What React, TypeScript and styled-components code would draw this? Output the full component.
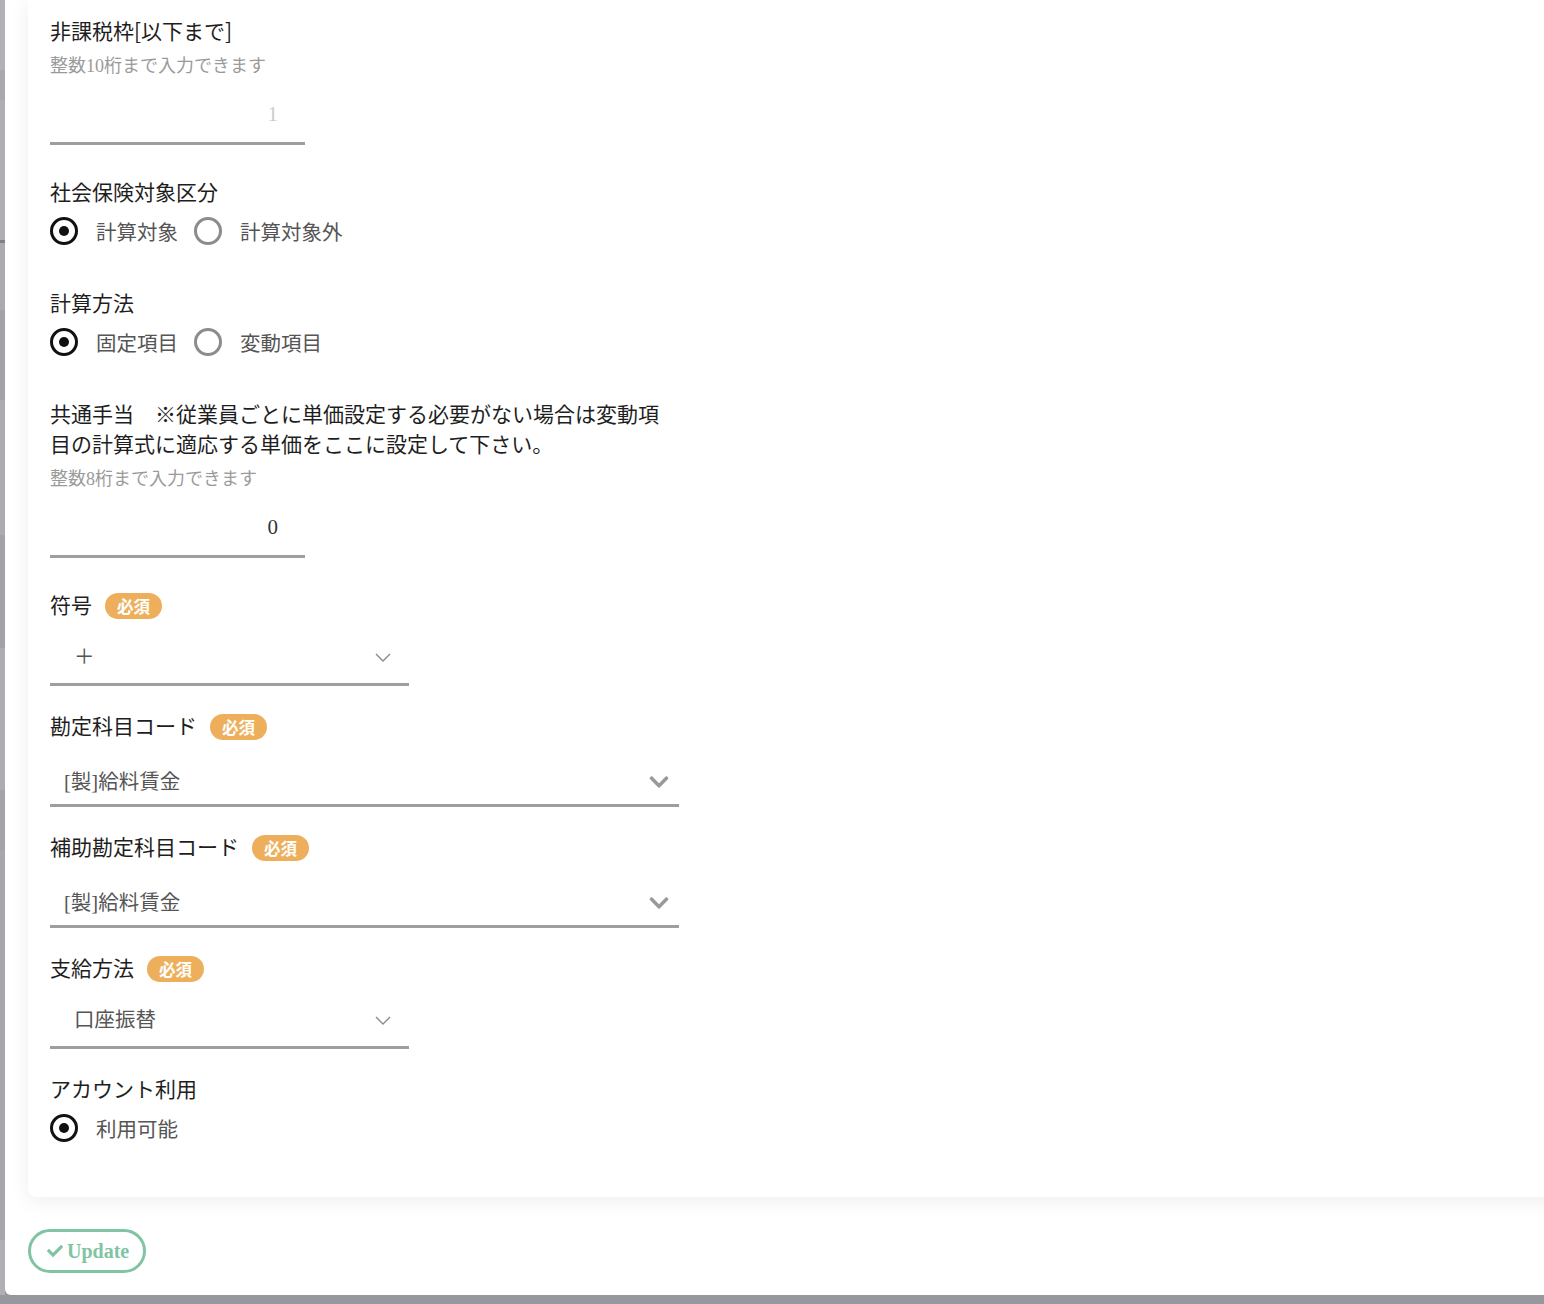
import React from 'react';
import styled, { createGlobalStyle } from 'styled-components';
import { FaCheck, FaChevronDown } from 'react-icons/fa';

const GlobalStyle = createGlobalStyle`
    html, body {
        margin: 0;
        padding: 0;
    }
    body {
        background: #97979f;
        font-family: "Noto Sans CJK JP", "Noto Sans", sans-serif;
        overflow: hidden;
    }
`;

const Page = styled.div`
    display: flex;
    width: 1544px;
    height: 1304px;
    overflow: hidden;
`;

const BehindStrip = styled.div`
    display: flex;
    flex-direction: column;
    width: 5px;
    height: 1295px;
    flex-shrink: 0;
`;

const Band = styled.div<{ h: number; shade: string }>`
    height: ${p => p.h}px;
    background: ${p => p.shade};
    flex-shrink: 0;
`;

const Modal = styled.div`
    width: 1600px;
    height: 1295px;
    flex-shrink: 0;
    background: #fff;
    border-bottom-left-radius: 6px;
    padding-left: 23px;
    box-sizing: border-box;
    display: flex;
    flex-direction: column;
`;

const Card = styled.div`
    background: #fff;
    border-radius: 0 0 8px 8px;
    box-shadow: 0 4px 20px rgba(0, 0, 0, 0.07);
    padding: 15px 22px 54px;
    display: flex;
    flex-direction: column;
`;

const Field = styled.div<{ after?: number }>`
    display: flex;
    flex-direction: column;
    margin-bottom: ${p => p.after ?? 0}px;
`;

const Label = styled.div<{ wrap?: number }>`
    display: flex;
    align-items: center;
    font-size: 21px;
    line-height: 30px;
    color: #1e1e1e;
    max-width: ${p => (p.wrap ? `${p.wrap}px` : 'none')};
`;

const Badge = styled.span`
    display: inline-flex;
    align-items: center;
    justify-content: center;
    width: 57px;
    height: 26px;
    margin: 4px 0 0 13px;
    border-radius: 13px;
    background: #edaf5b;
    color: #fff;
    font-size: 16.5px;
    font-weight: 700;
    line-height: 1;
`;

const Helper = styled.div`
    margin-top: 9px;
    font-family: "Liberation Serif", "Noto Sans CJK JP", serif;
    font-size: 18px;
    line-height: 24px;
    color: #9a9a9a;
`;

const TextInput = styled.div<{ placeholder?: boolean }>`
    margin-top: 7px;
    width: 255px;
    height: 60px;
    box-sizing: border-box;
    border-bottom: 3px solid #9e9e9e;
    padding: 2px 27px 0 0;
    display: flex;
    align-items: center;
    justify-content: flex-end;
    font-family: "Liberation Serif", serif;
    font-size: 21px;
    color: ${p => (p.placeholder ? '#cccccc' : '#333')};
`;

const RadioRow = styled.div`
    margin-top: 10px;
    height: 30px;
    display: flex;
    align-items: center;
`;

const RadioOption = styled.label`
    display: flex;
    align-items: center;
    margin-right: 16px;
    font-size: 20.5px;
    color: #555;
`;

const Circle = styled.span<{ checked?: boolean }>`
    width: 28px;
    height: 28px;
    box-sizing: border-box;
    border-radius: 50%;
    border: 3.5px solid ${p => (p.checked ? '#111' : '#8c8c8c')};
    display: flex;
    align-items: center;
    justify-content: center;
    margin-right: 18px;

    &::after {
        content: '';
        display: ${p => (p.checked ? 'block' : 'none')};
        width: 10px;
        height: 10px;
        border-radius: 50%;
        background: #111;
    }
`;

const Select = styled.div<{ wide?: boolean }>`
    width: ${p => (p.wide ? 629 : 359)}px;
    box-sizing: border-box;
    padding: ${p => (p.wide ? '20px 9px 0 14px' : '12px 18px 0 24px')};
    border-bottom: 3px solid #9e9e9e;
    display: flex;
    align-items: center;
    justify-content: space-between;
`;

const SelectValue = styled.span<{ wide?: boolean }>`
    font-family: "Liberation Serif", "Noto Sans CJK JP", serif;
    font-size: 20.5px;
    line-height: ${p => (p.wide ? 44 : 52)}px;
    color: #555;
`;

const ThinChevron = () => (
    <svg width="16" height="9" viewBox="0 0 16 9">
        <polyline points="1,1 8,8 15,1" fill="none" stroke="#8a8a8a" strokeWidth="1.4" />
    </svg>
);

const ButtonRow = styled.div`
    margin-top: 32px;
    display: flex;
`;

const UpdateButton = styled.button`
    display: flex;
    align-items: center;
    gap: 4px;
    height: 44px;
    width: 118px;
    box-sizing: border-box;
    padding: 0 0 0 16px;
    border: 3px solid #80c4a2;
    border-radius: 22px;
    background: #fff;
    color: #80c4a2;
    font-family: "Liberation Serif", serif;
    font-weight: 700;
    font-size: 20px;
    cursor: pointer;
`;

const bands: [number, string][] = [
    [70, '#b2b2b6'],
    [30, '#a9a9ad'],
    [140, '#afafb3'],
    [3, '#808086'],
    [67, '#ababaf'],
    [90, '#a3a3a7'],
    [135, '#acacb0'],
    [113, '#a2a2a6'],
    [142, '#adadb1'],
    [60, '#a4a4a8'],
    [390, '#a7a7ab'],
    [55, '#b0b0b4'],
];

export default function App() {
    return (
        <>
            <GlobalStyle />
            <Page>
                <BehindStrip>
                    {bands.map(([h, c], i) => (
                        <Band key={i} h={h} shade={c} />
                    ))}
                </BehindStrip>
                <Modal>
                    <Card>
                        <Field after={31}>
                            <Label>非課税枠[以下まで]</Label>
                            <Helper>整数10桁まで入力できます</Helper>
                            <TextInput placeholder>1</TextInput>
                        </Field>

                        <Field after={41}>
                            <Label>社会保険対象区分</Label>
                            <RadioRow>
                                <RadioOption><Circle checked />計算対象</RadioOption>
                                <RadioOption><Circle />計算対象外</RadioOption>
                            </RadioRow>
                        </Field>

                        <Field after={41}>
                            <Label>計算方法</Label>
                            <RadioRow>
                                <RadioOption><Circle checked />固定項目</RadioOption>
                                <RadioOption><Circle />変動項目</RadioOption>
                            </RadioRow>
                        </Field>

                        <Field after={31}>
                            <Label wrap={625}>
                                共通手当　※従業員ごとに単価設定する必要がない場合は変動項目の計算式に適応する単価をここに設定して下さい。
                            </Label>
                            <Helper>整数8桁まで入力できます</Helper>
                            <TextInput>0</TextInput>
                        </Field>

                        <Field after={24}>
                            <Label>符号<Badge>必須</Badge></Label>
                            <Select>
                                <SelectValue>＋</SelectValue>
                                <ThinChevron />
                            </Select>
                        </Field>

                        <Field after={24}>
                            <Label>勘定科目コード<Badge>必須</Badge></Label>
                            <Select wide>
                                <SelectValue wide>[製]給料賃金</SelectValue>
                                <FaChevronDown size={22} color="#999" />
                            </Select>
                        </Field>

                        <Field after={24}>
                            <Label>補助勘定科目コード<Badge>必須</Badge></Label>
                            <Select wide>
                                <SelectValue wide>[製]給料賃金</SelectValue>
                                <FaChevronDown size={22} color="#999" />
                            </Select>
                        </Field>

                        <Field after={24}>
                            <Label>支給方法<Badge>必須</Badge></Label>
                            <Select>
                                <SelectValue>口座振替</SelectValue>
                                <ThinChevron />
                            </Select>
                        </Field>

                        <Field>
                            <Label>アカウント利用</Label>
                            <RadioRow>
                                <RadioOption><Circle checked />利用可能</RadioOption>
                            </RadioRow>
                        </Field>
                    </Card>
                    <ButtonRow>
                        <UpdateButton>
                            <FaCheck size={16} />
                            Update
                        </UpdateButton>
                    </ButtonRow>
                </Modal>
            </Page>
        </>
    );
}
